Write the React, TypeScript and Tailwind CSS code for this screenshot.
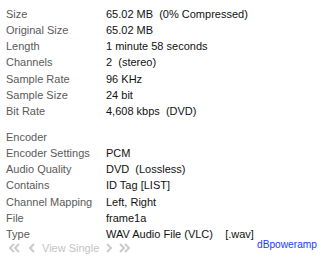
import React from 'react';

const top = [
    ['Size', '65.02 MB  (0% Compressed)'],
    ['Original Size', '65.02 MB'],
    ['Length', '1 minute 58 seconds'],
    ['Channels', '2  (stereo)'],
    ['Sample Rate', '96 KHz'],
    ['Sample Size', '24 bit'],
    ['Bit Rate', '4,608 kbps  (DVD)'],
];

const bottom = [
    ['Encoder', ''],
    ['Encoder Settings', 'PCM'],
    ['Audio Quality', 'DVD  (Lossless)'],
    ['Contains', 'ID Tag [LIST]'],
    ['Channel Mapping', 'Left, Right'],
    ['File', 'frame1a'],
    ['Type', 'WAV Audio File (VLC)    [.wav]'],
];

const Row: React.FC<{ label: string; value: string }> = ({ label, value }) => (
    <div className="flex h-[16.3px] leading-[16px]">
        <span className="w-[100px] shrink-0 text-[#5a5a5a]">{label}</span>
        <span className="whitespace-pre text-[#111]">{value}</span>
    </div>
);

const Chev: React.FC<{ dir: 'l' | 'r'; double?: boolean }> = ({ dir, double }) => {
    const pts = (x: number) => (dir === 'l' ? `${x + 4},1 ${x},5 ${x + 4},9` : `${x},1 ${x + 4},5 ${x},9`);
    return (
        <svg width={double ? 12 : 6} height="10" viewBox={double ? '0 0 12 10' : '0 0 6 10'} fill="none" stroke="#cbcbcb" strokeWidth="2">
            <polyline points={pts(1)} />
            {double && <polyline points={pts(6)} />}
        </svg>
    );
};

export default function App() {
    return (
        <div className="w-[324px] h-[260px] bg-white px-[6px] pt-[5.5px] text-[11px] overflow-hidden" style={{ fontFamily: '"Liberation Sans", Arial, sans-serif' }}>
            {top.map(([l, v]) => <Row key={l} label={l} value={v} />)}
            <div className="h-[9px]" />
            {bottom.map(([l, v]) => <Row key={l} label={l} value={v} />)}

            {/* nav + brand */}
            <div className="flex justify-between items-start -mt-[9px]">
                <div className="flex items-center mt-[6px] ml-[3px] text-[#c4c4c4] leading-[16px]">
                    <Chev dir="l" double />
                    <span className="ml-[8px]"><Chev dir="l" /></span>
                    <span className="ml-[7px]">View Single</span>
                    <span className="ml-[7px]"><Chev dir="r" /></span>
                    <span className="ml-[7px]"><Chev dir="r" double /></span>
                </div>
                <span className="mt-[3.5px] mr-[1px] text-[10.2px] text-[#1c3cf0] leading-[16px]">dBpoweramp</span>
            </div>
        </div>
    );
}
